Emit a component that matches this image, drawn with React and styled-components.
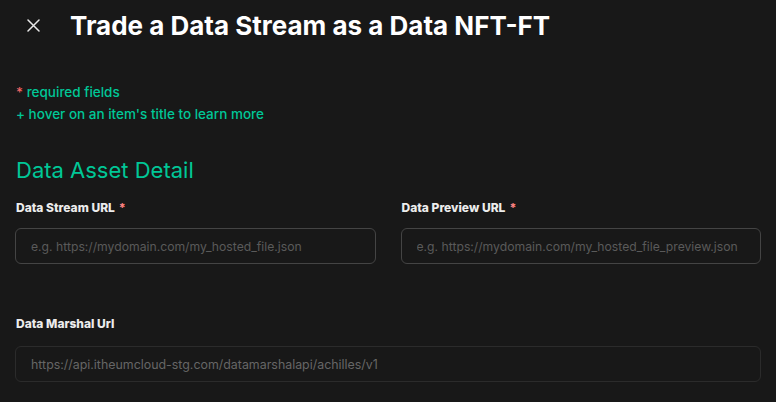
import React from "react";
import styled, { createGlobalStyle } from "styled-components";

const Global = createGlobalStyle`
  html, body { margin: 0; padding: 0; background: #181818; }
  body { font-family: Inter, "Noto Sans", sans-serif; color: #ffffff; }
  * { box-sizing: border-box; }
`;

const Page = styled.div`
  width: 776px;
  height: 402px;
  overflow: hidden;
  background: #181818;
`;

const Header = styled.header`
  display: flex;
  align-items: center;
  height: 50px;
  padding-left: 26px;
  gap: 30px;
`;

const CloseButton = styled.button`
  width: 14px;
  height: 14px;
  padding: 0;
  border: 0;
  background: transparent;
  color: #e8e8e8;
  display: flex;
  align-items: center;
  justify-content: center;
  cursor: pointer;
`;

const Title = styled.h1`
  margin: 0;
  font-size: 26px;
  font-weight: 700;
  color: #ffffff;
  letter-spacing: 0;
`;

const Body = styled.div`
  padding: 31px 15px 0 16px;
`;

const Note = styled.p`
  margin: 0;
  font-size: 13.5px;
  font-weight: 500;
  line-height: 22px;
  color: #00c797;
`;

const Star = styled.span`
  color: #f56565;
`;

const SectionTitle = styled.h2`
  margin: 30px 0 0 0;
  font-size: 22px;
  font-weight: 400;
  line-height: 30px;
  color: #00c797;
`;

const Row = styled.div`
  display: grid;
  grid-template-columns: ${(p) => (p.cols === 2 ? "1fr 1fr" : "1fr")};
  column-gap: 25px;
  margin-top: ${(p) => p.top}px;
  margin-left: -1px;
`;

const Field = styled.div`
  display: flex;
  flex-direction: column;
`;

const Label = styled.label`
  font-size: 12px;
  font-weight: 800;
  line-height: 16px;
  color: #ececec;
  padding-left: 1px;
  margin-bottom: ${(p) => p.gap || 12}px;
`;

const LabelStar = styled.span`
  color: #fc8181;
  margin-left: 4px;
`;

const Input = styled.input`
  width: 100%;
  height: 36px;
  border-radius: 6px;
  border: 1px solid ${(p) => (p.disabled ? "#2b2b2b" : "#444444")};
  background: transparent;
  padding: 0 15px;
  font-family: Inter, "Noto Sans", sans-serif;
  font-size: ${(p) => (p.disabled ? 12.4 : 12.2)}px;
  color: #666666;
  outline: none;
  &::placeholder { color: #5a5a5a; }
`;

export default function App() {
  return (
    <Page>
      <Global />
      <Header>
        <CloseButton aria-label="Close">
          <svg width="13" height="13" viewBox="0 0 13 13">
            <path d="M1 1 L12 12 M12 1 L1 12" stroke="currentColor" strokeWidth="1.5" strokeLinecap="round" />
          </svg>
        </CloseButton>
        <Title>Trade a Data Stream as a Data NFT-FT</Title>
      </Header>
      <Body>
        <Note><Star>*</Star> required fields</Note>
        <Note>+ hover on an item's title to learn more</Note>
        <SectionTitle>Data Asset Detail</SectionTitle>
        <Row cols={2} top={15}>
          <Field>
            <Label>Data Stream URL<LabelStar>*</LabelStar></Label>
            <Input placeholder="e.g. https://mydomain.com/my_hosted_file.json" />
          </Field>
          <Field>
            <Label>Data Preview URL<LabelStar>*</LabelStar></Label>
            <Input placeholder="e.g. https://mydomain.com/my_hosted_file_preview.json" />
          </Field>
        </Row>
        <Row cols={1} top={52}>
          <Field>
            <Label gap={14}>Data Marshal Url</Label>
            <Input disabled value="https://api.itheumcloud-stg.com/datamarshalapi/achilles/v1" readOnly />
          </Field>
        </Row>
      </Body>
    </Page>
  );
}
